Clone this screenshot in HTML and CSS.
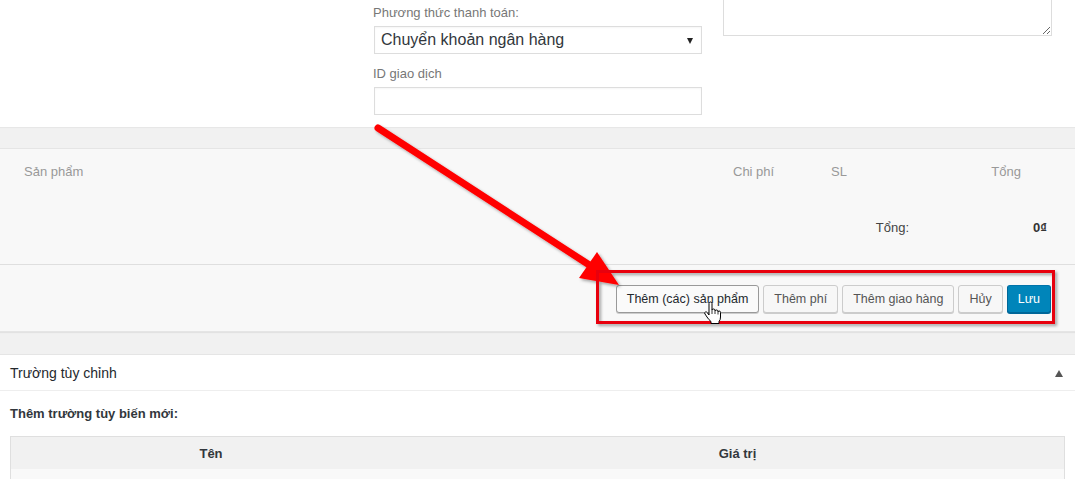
FILE: index.html
```html
<!DOCTYPE html>
<html lang="vi">
<head>
    <meta charset="UTF-8">
    <meta name="viewport" content="width=device-width, initial-scale=1.0">
    <title>Đơn hàng</title>
    <link rel="stylesheet" href="styles.css">
</head>
<body>

    <!-- Thông tin đơn hàng -->
    <section class="order-data">
        <div class="col"></div>
        <div class="col">
            <label class="field-label">Phương thức thanh toán:</label>
            <div class="select">Chuyển khoản ngân hàng<span class="caret"></span></div>
            <label class="field-label second">ID giao dịch</label>
            <div class="text-input"></div>
        </div>
        <div class="col">
            <textarea class="note"></textarea>
        </div>
    </section>

    <!-- Sản phẩm trong đơn -->
    <section class="items">
        <div class="items-head">
            <span>Sản phẩm</span>
            <span>Chi phí</span>
            <span>SL</span>
            <span>Tổng</span>
        </div>
        <div class="items-totals">
            <span class="total-label">Tổng:</span>
            <span class="total-value">0₫</span>
        </div>
        <div class="items-actions">
            <button class="btn hover">Thêm (các) sản phẩm</button>
            <button class="btn">Thêm phí</button>
            <button class="btn">Thêm giao hàng</button>
            <button class="btn">Hủy</button>
            <button class="btn primary">Lưu</button>
        </div>
    </section>

    <!-- Trường tùy chỉnh -->
    <section class="postbox">
        <div class="postbox-head">
            <h2>Trường tùy chỉnh</h2>
            <span class="toggle"></span>
        </div>
        <div class="postbox-body">
            <p><strong>Thêm trường tùy biến mới:</strong></p>
            <table class="meta-table">
                <thead>
                    <tr>
                        <th class="name-col">Tên</th>
                        <th>Giá trị</th>
                    </tr>
                </thead>
                <tbody>
                    <tr><td></td><td></td></tr>
                </tbody>
            </table>
        </div>
    </section>

    <!-- Chú thích: mũi tên, khung đỏ và con trỏ -->
    <svg class="annotation" width="1075" height="479" viewBox="0 0 1075 479">
        <defs>
            <filter id="shadow" x="-10%" y="-10%" width="120%" height="130%">
                <feDropShadow dx="2" dy="2" stdDeviation="1.6" flood-color="#000" flood-opacity="0.35"/>
            </filter>
        </defs>
        <g filter="url(#shadow)">
            <line x1="378" y1="128" x2="594" y2="268" stroke="#f00" stroke-width="7" stroke-linecap="round"/>
            <polygon points="619,285 597,252 579,278" fill="#f00"/>
            <rect x="597.5" y="271.5" width="456" height="51" fill="none" stroke="#e8000b" stroke-width="3"/>
        </g>
        <g transform="translate(704,302)">
            <path d="M5 1.5 Q5 0 6.5 0 Q8 0 8 1.5 V8 Q8 7 9.5 7 Q11 7 11 8.5 V9 Q11 8 12.5 8 Q14 8 14 9.5 V10 Q14 9 15.2 9 Q16.5 9 16.5 10.5 V15 Q16.5 18 15 19.5 V21.5 H7 V19.5 Q5 18 3 15 L1 12 Q0 10.5 1.5 10 Q2.7 9.6 3.6 11 L5 13 Z" fill="#fff" stroke="#000" stroke-width="1"/>
            <path d="M8 8 V12 M11 9 V12 M14 10 V12.5" stroke="#000" stroke-width="0.8"/>
        </g>
    </svg>

</body>
</html>
```

FILE: styles.css
```css
/* Sayfa genel */
body {
    font-family: "Liberation Sans", Arial, sans-serif;
    font-size: 13px;
    color: #444;
    background-color: #f1f1f1;
    margin: 0;
    padding: 0;
    position: relative;
    overflow: hidden;
}

/* Thông tin đơn hàng */
.order-data {
    display: flex;
    gap: 21px;
    padding: 4px 22px 12px 25px;
    background-color: #fff;
    box-shadow: 0 1px 1px rgba(0, 0, 0, 0.04);
}

.col {
    width: 328px;
    display: flex;
    flex-direction: column;
}

.col:last-child {
    width: 329px;
}

.field-label {
    display: block;
    margin-left: -1px;
    line-height: 18px;
    color: #777;
}

.field-label.second {
    margin-top: 11px;
}

.select,
.text-input {
    box-sizing: border-box;
    height: 28px;
    margin-top: 4px;
    border: 1px solid #ddd;
    box-shadow: inset 0 1px 2px rgba(0, 0, 0, 0.04);
    background-color: #fff;
}

.select {
    position: relative;
    padding: 0 6px;
    font-size: 16px;
    line-height: 26px;
    color: #32373c;
}

.caret {
    position: absolute;
    right: 8px;
    top: 11px;
    border-left: 3.5px solid transparent;
    border-right: 3.5px solid transparent;
    border-top: 6px solid #222;
}

.note {
    box-sizing: border-box;
    width: 100%;
    height: 72px;
    margin: -40px 0 0;
    border: 1px solid #ddd;
    background-color: #fff;
    font-family: inherit;
}

/* Sản phẩm */
.items {
    margin-top: 21px;
    background-color: #f8f8f8;
    border-top: 1px solid #e5e5e5;
    border-bottom: 1px solid #e5e5e5;
    box-shadow: 0 1px 1px rgba(0, 0, 0, 0.06);
}

.items-head {
    display: grid;
    grid-template-columns: 709px 98px 1fr auto;
    padding: 14px 54px 19px 24px;
    line-height: 18px;
    color: #999;
}

.items-totals {
    display: flex;
    justify-content: flex-end;
    padding: 19px 28px 27px 0;
    line-height: 18px;
}

.total-label {
    color: #444;
}

.total-value {
    width: 138px;
    text-align: right;
    font-weight: bold;
    color: #333;
}

.items-actions {
    display: flex;
    justify-content: flex-end;
    gap: 4px;
    padding: 20px 24px 18px 0;
    border-top: 1px solid #dfdfdf;
}

.btn {
    height: 28px;
    padding: 0 10px;
    font-family: inherit;
    font-size: 12.5px;
    color: #555;
    background-color: #f7f7f7;
    border: 1px solid #ccc;
    border-radius: 3px;
    box-shadow: 0 1px 0 #ccc;
}

.btn.hover {
    color: #23282d;
    background-color: #fafafa;
    border-color: #999;
}

.btn.primary {
    color: #fff;
    background-color: #0085ba;
    border-color: #0073aa #006799 #006799;
    box-shadow: 0 1px 0 #006799;
}

/* Trường tùy chỉnh */
.postbox {
    margin-top: 22px;
    background-color: #fff;
    border-top: 1px solid #e5e5e5;
}

.postbox-head {
    display: flex;
    align-items: center;
    justify-content: space-between;
    padding: 8px 12px 7px 10px;
    border-bottom: 1px solid #eee;
}

.postbox-head h2 {
    margin: 0;
    font-size: 14px;
    font-weight: normal;
    line-height: 20px;
    color: #23282d;
}

.toggle {
    border-left: 4px solid transparent;
    border-right: 4px solid transparent;
    border-bottom: 7px solid #555;
}

.postbox-body {
    padding: 14px 10px 0;
}

.postbox-body p {
    margin: 0 0 13px;
    line-height: 18px;
    color: #32373c;
}

.meta-table {
    width: 100%;
    border-collapse: collapse;
    border: 1px solid #dfdfdf;
}

.meta-table th {
    height: 32px;
    padding: 0;
    background-color: #f1f1f1;
    font-size: 13px;
    color: #32373c;
}

.name-col {
    width: 400px;
}

.meta-table td {
    height: 30px;
    background-color: #f9f9f9;
}

/* Chú thích */
.annotation {
    position: absolute;
    top: 0;
    left: 0;
    pointer-events: none;
}
```
